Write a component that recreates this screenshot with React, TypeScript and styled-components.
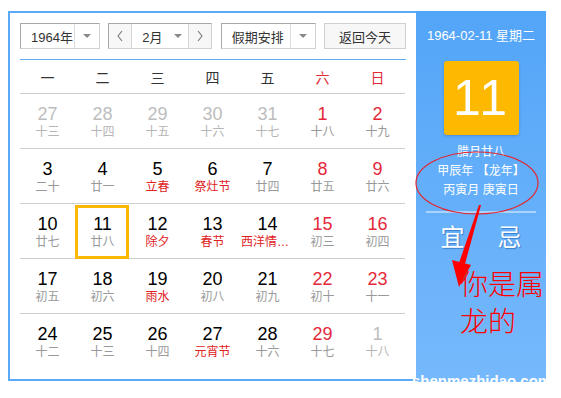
import React from "react";
import styled, { createGlobalStyle } from "styled-components";

const GlobalStyle = createGlobalStyle`
  html, body {
    margin: 0;
    padding: 0;
    background: #fff;
  }
  body {
    font-family: "Liberation Sans", "Noto Sans CJK SC", sans-serif;
  }
`;

const Page = styled.div`
  padding: 11px 0 0 8px;
`;

const Calendar = styled.div`
  position: relative;
  display: flex;
  width: 538px;
  height: 371px;
`;

const Main = styled.div`
  box-sizing: border-box;
  width: 408px;
  height: 370px;
  border: 2px solid #5ca9f5;
  border-right: 0;
  padding: 10px 10px 0 10px;
`;

const Toolbar = styled.div`
  display: flex;
  height: 26px;
  justify-content: space-between;
  padding-bottom: 10px;
  border-bottom: 1px solid #62acf4;
`;

const SelectBox = styled.div<{ $w: number }>`
  box-sizing: border-box;
  display: flex;
  width: ${(p) => p.$w}px;
  height: 26px;
  border: 1px solid;
  border-color: #a8a8a8 #d2d2d2 #d2d2d2 #a8a8a8;
  background: #fff;
  font-size: 13px;
  color: #333;
`;

const SelectText = styled.div`
  flex: 1;
  display: flex;
  align-items: center;
  padding-left: 10px;
`;

const Caret = styled.div<{ $plain?: boolean }>`
  width: ${(p) => (p.$plain ? 20 : 24)}px;
  border-left: ${(p) => (p.$plain ? "0" : "1px solid #dcdcdc")};
  display: flex;
  align-items: center;
  justify-content: center;
  &::after {
    content: "";
    border-left: 4px solid transparent;
    border-right: 4px solid transparent;
    border-top: 4px solid #8a8a8a;
  }
`;

const Group = styled.div`
  box-sizing: border-box;
  display: flex;
  width: 104px;
  height: 26px;
  border: 1px solid;
  border-color: #a8a8a8 #d2d2d2 #d2d2d2 #a8a8a8;
  font-size: 13px;
  color: #333;
`;

const Step = styled.div<{ $side: "l" | "r" }>`
  width: 22px;
  display: flex;
  align-items: center;
  justify-content: center;
  background: #f7f7f7;
  ${(p) => (p.$side === "l" ? "border-right" : "border-left")}: 1px solid #d6d6d6;
`;

const Button = styled.div`
  box-sizing: border-box;
  width: 82px;
  height: 26px;
  border: 1px solid #d0d0d0;
  background: #f7f7f7;
  font-size: 13px;
  color: #333;
  display: flex;
  align-items: center;
  justify-content: center;
`;

const Grid = styled.div`
  display: grid;
  grid-template-columns: repeat(7, 55px);
`;

const Head = styled.div<{ $red?: boolean }>`
  height: 33px;
  display: flex;
  align-items: center;
  justify-content: center;
  font-size: 14px;
  color: ${(p) => (p.$red ? "#e12a34" : "#333")};
  border-bottom: 1px solid #cfcfcf;
`;

const Cell = styled.div<{ $last?: boolean; $selected?: boolean }>`
  position: relative;
  box-sizing: border-box;
  height: ${(p) => (p.$last ? 65 : 55)}px;
  border-bottom: ${(p) => (p.$last ? "0" : "1px solid #cfcfcf")};
  display: flex;
  flex-direction: column;
  align-items: center;
  padding-top: 10px;
  &::before {
    content: "";
    display: ${(p) => (p.$selected ? "block" : "none")};
    position: absolute;
    left: 0;
    top: 1px;
    width: 54px;
    height: 54px;
    box-sizing: border-box;
    border: 3px solid #fbb800;
  }
`;

type Tone = "dim" | "normal" | "red";

const Num = styled.div<{ $tone: Tone }>`
  font-size: 18px;
  line-height: 20px;
  color: ${(p) =>
    p.$tone === "dim" ? "#bdbdbd" : p.$tone === "red" ? "#e4283a" : "#000"};
`;

const Lunar = styled.div<{ $tone: "dim" | "normal" | "fest" }>`
  font-size: 12px;
  line-height: 16px;
  max-width: 53px;
  white-space: nowrap;
  overflow: hidden;
  text-overflow: ellipsis;
  color: ${(p) =>
    p.$tone === "dim" ? "#b5b5b5" : p.$tone === "fest" ? "#e02222" : "#999"};
`;

const Side = styled.div`
  width: 130px;
  height: 371px;
  background: linear-gradient(#53a5f8, #76b9fc);
  display: flex;
  flex-direction: column;
  align-items: center;
  color: #fff;
  padding-top: 16px;
  box-sizing: border-box;
`;

const DateLine = styled.div`
  font-size: 13px;
  line-height: 18px;
`;

const BigDay = styled.div`
  margin-top: 16px;
  width: 75px;
  height: 74px;
  border-radius: 3px;
  background: #fdb900;
  box-shadow: 0 1px 3px rgba(0, 40, 100, 0.25);
  display: flex;
  align-items: center;
  justify-content: center;
  font-size: 50px;
  letter-spacing: 2px;
  color: #fff;
`;

const LunarInfo = styled.div`
  margin-top: 8px;
  font-size: 12px;
  line-height: 19px;
  text-align: center;
`;

const Divider = styled.div`
  margin-top: 11px;
  width: 110px;
  height: 2px;
  background: rgba(255, 255, 255, 0.45);
`;

const Omens = styled.div`
  margin-top: 10px;
  display: flex;
  gap: 33px;
  font-size: 24px;
  line-height: 30px;
  text-shadow: 1px 1px 1px rgba(0, 60, 140, 0.45);
`;

const Overlay = styled.svg`
  position: absolute;
  left: 0;
  top: 0;
  pointer-events: none;
`;

const Note = styled.div`
  position: absolute;
  left: 452px;
  top: 254px;
  font-family: "Noto Sans CJK SC", sans-serif;
  font-weight: 300;
  font-size: 28px;
  line-height: 37px;
  color: #ff0000;
  width: 90px;
`;

const Watermark = styled.div`
  position: absolute;
  left: 404px;
  top: 361px;
  height: 10px;
  width: 134px;
  overflow: hidden;
  font-family: "Liberation Sans", sans-serif;
  font-weight: bold;
  font-size: 15px;
  line-height: 18px;
  color: #fff;
  white-space: nowrap;
`;

type Day = { n: number; l: string; t: Tone; f?: boolean };

const rows: Day[][] = [
  [
    { n: 27, l: "十三", t: "dim" },
    { n: 28, l: "十四", t: "dim" },
    { n: 29, l: "十五", t: "dim" },
    { n: 30, l: "十六", t: "dim" },
    { n: 31, l: "十七", t: "dim" },
    { n: 1, l: "十八", t: "red" },
    { n: 2, l: "十九", t: "red" },
  ],
  [
    { n: 3, l: "二十", t: "normal" },
    { n: 4, l: "廿一", t: "normal" },
    { n: 5, l: "立春", t: "normal", f: true },
    { n: 6, l: "祭灶节", t: "normal", f: true },
    { n: 7, l: "廿四", t: "normal" },
    { n: 8, l: "廿五", t: "red" },
    { n: 9, l: "廿六", t: "red" },
  ],
  [
    { n: 10, l: "廿七", t: "normal" },
    { n: 11, l: "廿八", t: "normal" },
    { n: 12, l: "除夕", t: "normal", f: true },
    { n: 13, l: "春节", t: "normal", f: true },
    { n: 14, l: "西洋情人节", t: "normal", f: true },
    { n: 15, l: "初三", t: "red" },
    { n: 16, l: "初四", t: "red" },
  ],
  [
    { n: 17, l: "初五", t: "normal" },
    { n: 18, l: "初六", t: "normal" },
    { n: 19, l: "雨水", t: "normal", f: true },
    { n: 20, l: "初八", t: "normal" },
    { n: 21, l: "初九", t: "normal" },
    { n: 22, l: "初十", t: "red" },
    { n: 23, l: "十一", t: "red" },
  ],
  [
    { n: 24, l: "十二", t: "normal" },
    { n: 25, l: "十三", t: "normal" },
    { n: 26, l: "十四", t: "normal" },
    { n: 27, l: "元宵节", t: "normal", f: true },
    { n: 28, l: "十六", t: "normal" },
    { n: 29, l: "十七", t: "red" },
    { n: 1, l: "十八", t: "dim" },
  ],
];

const weekdays = ["一", "二", "三", "四", "五", "六", "日"];

const Chevron = ({ dir }: { dir: "l" | "r" }) => (
  <svg width="8" height="12" viewBox="0 0 8 12">
    <polyline
      points={dir === "l" ? "6,1 2,6 6,11" : "2,1 6,6 2,11"}
      fill="none"
      stroke="#777"
      strokeWidth="1.1"
    />
  </svg>
);

export default function App() {
  return (
    <>
      <GlobalStyle />
      <Page>
        <Calendar>
          <Main>
            <Toolbar>
              <SelectBox $w={80}>
                <SelectText>1964年</SelectText>
                <Caret />
              </SelectBox>
              <Group>
                <Step $side="l">
                  <Chevron dir="l" />
                </Step>
                <SelectText>2月</SelectText>
                <Caret $plain />
                <Step $side="r">
                  <Chevron dir="r" />
                </Step>
              </Group>
              <SelectBox $w={95}>
                <SelectText>假期安排</SelectText>
                <Caret />
              </SelectBox>
              <Button>返回今天</Button>
            </Toolbar>
            <Grid>
              {weekdays.map((w, i) => (
                <Head key={w} $red={i >= 5}>
                  {w}
                </Head>
              ))}
              {rows.map((row, r) =>
                row.map((d, c) => (
                  <Cell
                    key={`${r}-${c}`}
                    $last={r === rows.length - 1}
                    $selected={r === 2 && c === 1}
                  >
                    <Num $tone={d.t}>{d.n}</Num>
                    <Lunar $tone={d.f ? "fest" : d.t === "dim" ? "dim" : "normal"}>
                      {d.l}
                    </Lunar>
                  </Cell>
                ))
              )}
            </Grid>
          </Main>
          <Side>
            <DateLine>1964-02-11 星期二</DateLine>
            <BigDay>11</BigDay>
            <LunarInfo>
              腊月廿八
              <br />
              甲辰年 【龙年】
              <br />
              丙寅月 庚寅日
            </LunarInfo>
            <Divider />
            <Omens>
              <span>宜</span>
              <span>忌</span>
            </Omens>
          </Side>
          <Overlay width="560" height="380" viewBox="0 0 560 380">
            <ellipse cx="469" cy="172" rx="61" ry="31" fill="none" stroke="#e3262f" strokeWidth="1.2" />
            <polygon points="471,194 473,194 457,253 451,252" fill="#ff0000" />
            <polygon points="444,249 463,254 451,276" fill="#ff0000" />
          </Overlay>
          <Note>
            你是属
            <br />
            龙的
          </Note>
          <Watermark>shenmezhidao.com</Watermark>
        </Calendar>
      </Page>
    </>
  );
}
